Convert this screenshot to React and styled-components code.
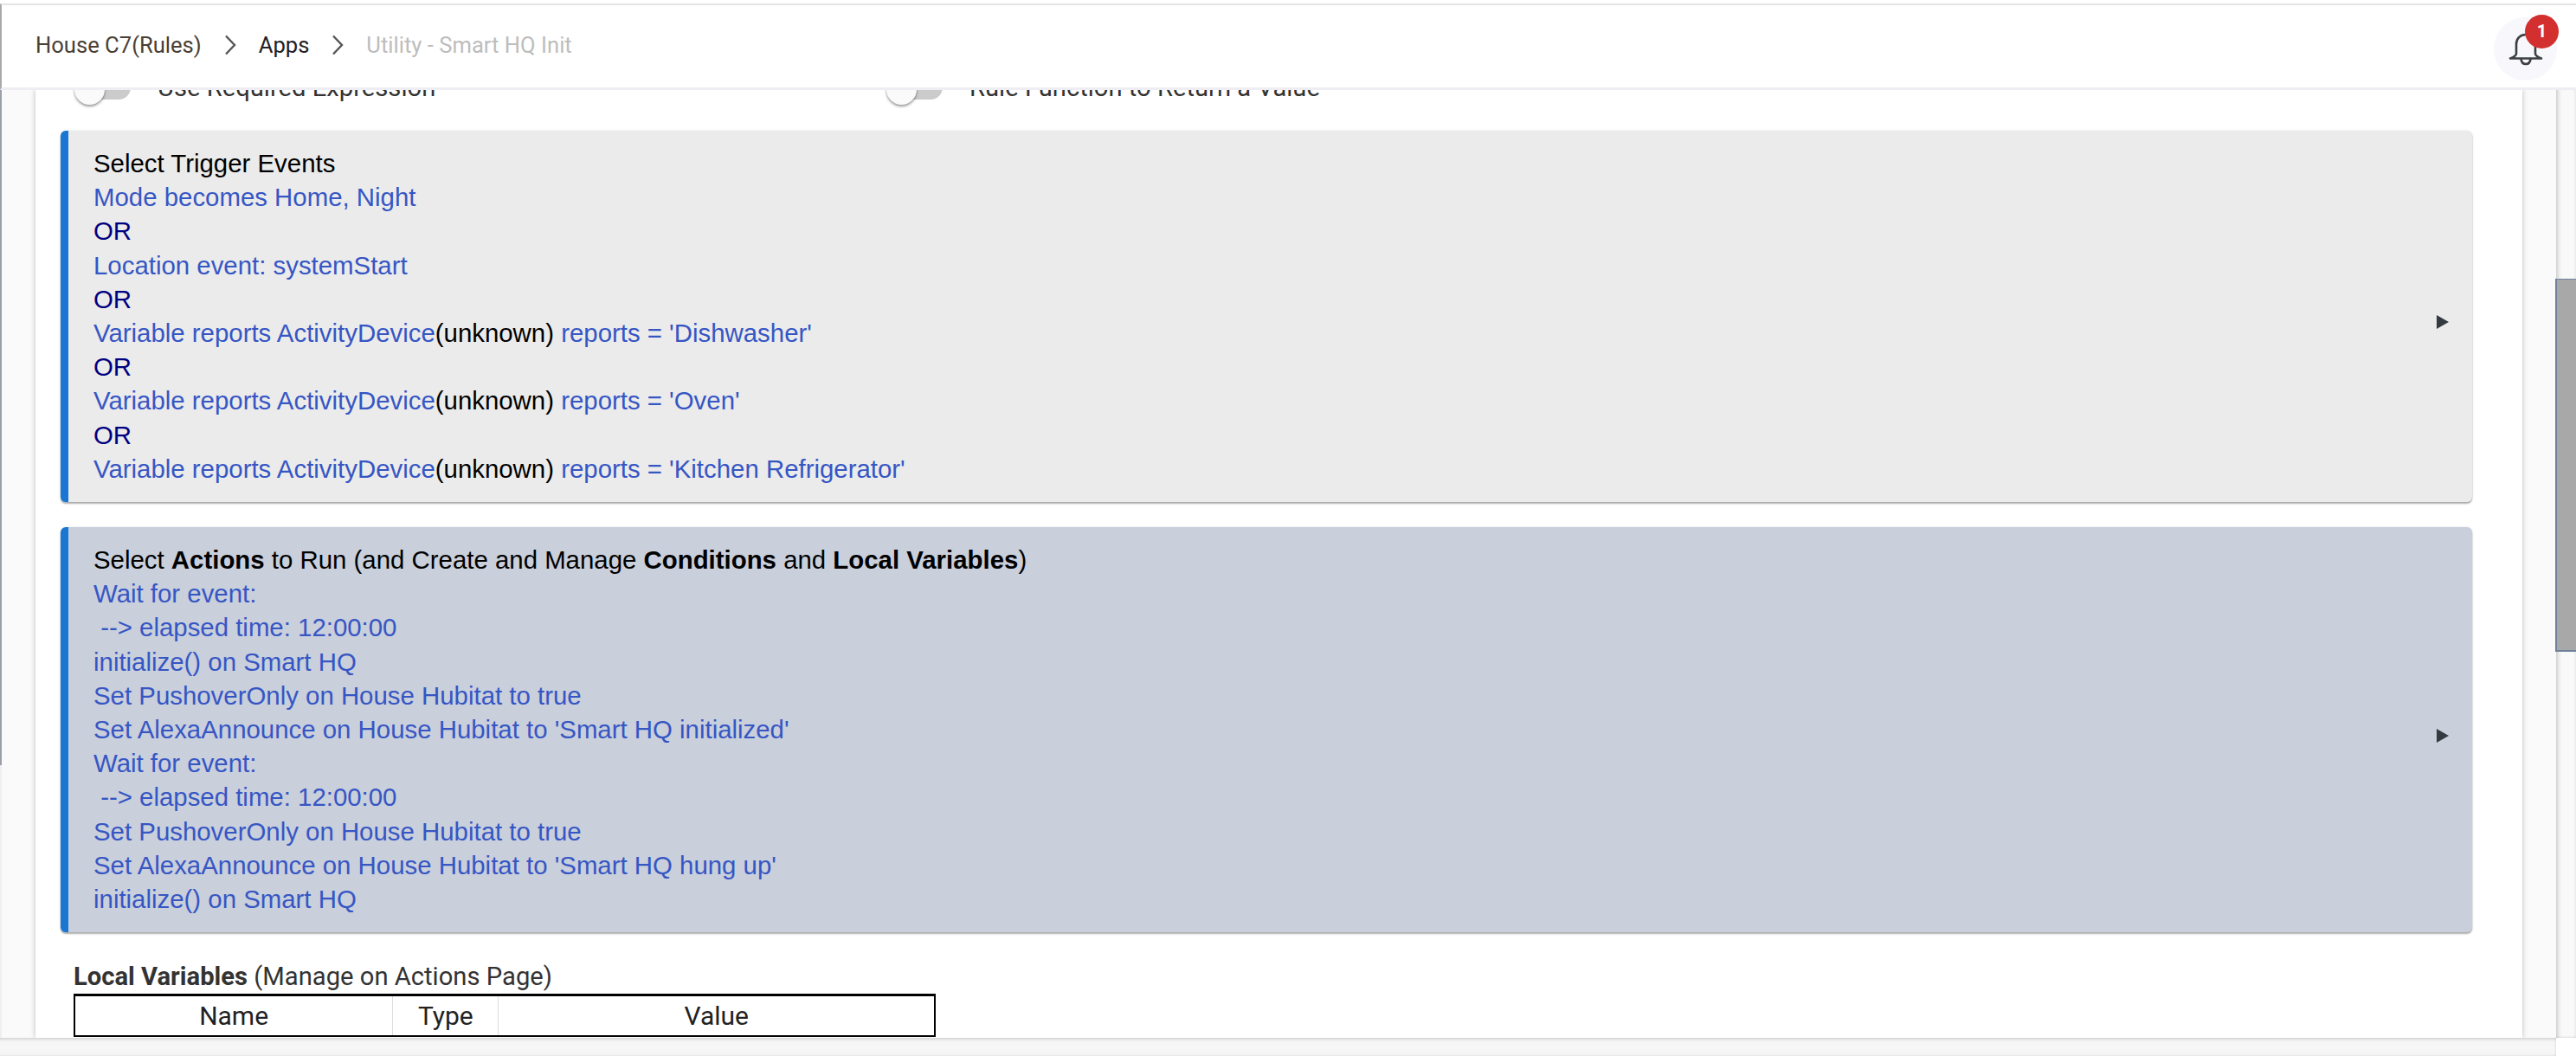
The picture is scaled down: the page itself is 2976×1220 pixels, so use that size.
import React from 'react';
import styled, { createGlobalStyle } from 'styled-components';

const Global = createGlobalStyle`
  html, body { margin: 0; padding: 0; height: 100%; background: #fff; overflow: hidden; }
  * { box-sizing: border-box; }
`;

const Page = styled.div`
  width: 2976px;
  height: 1220px;
  display: flex;
  flex-direction: column;
  overflow: hidden;
  font-family: Roboto, "Liberation Sans", sans-serif;
  background: #fff;
`;

const Header = styled.header`
  flex: none;
  height: 100px;
  margin-top: 4px;
  border-top: 2px solid #e4e4e4;
  border-bottom: 3px solid #eeedf3;
  border-left: 2px solid #a9a9a9;
  display: flex;
  align-items: center;
  justify-content: space-between;
  padding: 0 22px 0 39px;
  background: #fff;
  position: relative;
  z-index: 2;
`;

const Crumbs = styled.nav`
  display: flex;
  align-items: center;
  font-size: 25.6px;
  margin-top: -3px;
`;

const Crumb = styled.span`
  color: ${p => p.$color};
`;

const Chevron = styled.svg`
  width: 14px;
  height: 24px;
  margin: 0 26px;
  fill: none;
  stroke: #555;
  stroke-width: 2.4;
`;

const BellButton = styled.div`
  position: relative;
  width: 73px;
  height: 73px;
  border-radius: 50%;
  background: #f7f7fc;
  display: flex;
  align-items: center;
  justify-content: center;
  margin-top: 5px;
`;

const Badge = styled.span`
  position: absolute;
  top: -3px;
  right: -2px;
  width: 39px;
  height: 39px;
  border-radius: 50%;
  background: #d32f2f;
  color: #fff;
  font-size: 20px;
  font-weight: 700;
  display: flex;
  align-items: center;
  justify-content: center;
`;

const Body = styled.div`
  flex: 1;
  min-height: 0;
  display: flex;
`;

const Viewport = styled.div`
  flex: 1;
  min-width: 0;
  background: #fafafa;
  padding: 0 39px 0 39px;
  border-left: 2px solid;
  border-image: linear-gradient(#9a9fa8 0 780px, #efefef 780px) 1;
  overflow: hidden;
`;

const Card = styled.main`
  background: #fff;
  height: 100%;
  padding: 0 58px 0 29px;
  box-shadow: 0 0 6px rgba(0, 0, 0, 0.25);
  overflow: hidden;
`;

const ToggleRow = styled.div`
  display: flex;
  height: 47px;
`;

const ToggleCell = styled.div`
  width: 938px;
  display: flex;
  align-items: center;
  padding-left: 16px;
  flex: none;
  height: 67px;
  margin-top: -37px;
`;

const Track = styled.span`
  position: relative;
  display: block;
  width: 65px;
  height: 28px;
  border-radius: 14px;
  background: #cbcbcb;
  margin-right: 31px;
  flex: none;
`;

const Knob = styled.span`
  position: absolute;
  left: 0;
  top: -1px;
  width: 35px;
  height: 35px;
  border-radius: 50%;
  background: #fafafa;
  box-shadow: 0 2px 3px rgba(0, 0, 0, 0.4);
`;

const ToggleLabel = styled.span`
  font-size: 29.2px;
  color: #333;
  white-space: nowrap;
`;

const Panel = styled.section`
  position: relative;
  background: ${p => p.$bg};
  border-left: 9px solid #1976d2;
  border-radius: 6px;
  margin-top: ${p => p.$gap}px;
  padding: 18px 31px 19px 29px;
  box-shadow: 0 2px 2px rgba(0, 0, 0, 0.3), 0 0 3px rgba(0, 0, 0, 0.1);
  display: flex;
  justify-content: space-between;
  align-items: center;
  width: 2786px;
`;

const Lines = styled.div`
  font-family: "Liberation Sans", Arial, sans-serif;
  font-size: 29.4px;
  line-height: 39.2px;
`;

const Line = styled.div`
  color: ${p => p.$color || '#3656c4'};
  white-space: pre;
`;

const Plain = styled.span`
  color: #000;
`;

const Arrow = styled.span`
  display: block;
  width: 0;
  height: 0;
  border-left: 14px solid #343a40;
  border-top: 8px solid transparent;
  border-bottom: 8px solid transparent;
  margin: 14px -4px 0 0;
`;

const VarsTitle = styled.div`
  margin: 32px 0 0 15px;
  font-size: 29.2px;
  line-height: 39px;
  color: #333;
`;

const VarTable = styled.table`
  margin: 0 0 0 15px;
  width: 996px;
  border-collapse: collapse;
  border: solid #000;
  border-width: 3px 2px 2px;
  table-layout: fixed;
`;

const Th = styled.th`
  font-size: 30px;
  font-weight: 400;
  color: #222;
  height: 47px;
  padding: 0;
  border-right: 1px solid #dcdcdc;
  width: ${p => p.$w}px;
  &:last-child { border-right: 0; }
`;

const VScroll = styled.aside`
  width: 23px;
  flex: none;
  display: flex;
  flex-direction: column;
  background: #f9f9f9;
  box-shadow: inset 6px 0 5px -4px rgba(0, 0, 0, 0.2), inset -4px 0 4px -4px rgba(0, 0, 0, 0.12), inset 0 -3px 3px -3px rgba(0, 0, 0, 0.2);
`;

const VThumb = styled.div`
  width: calc(100% + 1px);
  height: 431px;
  margin: 218px 0 0 -1px;
  background: #a8a8a8;
  border: solid #6f829c;
  border-width: 1px 0 2px 2px;
`;

const BottomRow = styled.div`
  flex: none;
  height: 21px;
  display: flex;
`;

const HScroll = styled.div`
  flex: 1;
  background: #f6f6f6;
  box-shadow: inset 0 5px 4px -4px rgba(0, 0, 0, 0.2), inset 0 -3px 3px -3px rgba(0, 0, 0, 0.15), inset -3px 0 3px -3px rgba(0, 0, 0, 0.15);
`;

const Corner = styled.div`
  width: 23px;
  background: #fff;
`;

const Chev = () => (
  <Chevron viewBox="0 0 14 24"><path d="M2 1.5 L12 12 L2 22.5" /></Chevron>
);

const Bell = () => (
  <svg width="42" height="42" viewBox="0 0 42 42" fill="none" stroke="#3c4043" strokeWidth="2.6" strokeLinecap="round" strokeLinejoin="round">
    <path d="M10 27 V16 C10 9.5 14.5 5 21 5 C27.5 5 32 9.5 32 16 V27 C32 29 35 31 39 32.5 H3 C7 31 10 29 10 27 Z" />
    <path d="M15.5 33 C16 37.5 18.5 39 21 39 C23.5 39 26 37.5 26.5 33" />
  </svg>
);

const Toggle = ({ label }) => (
  <ToggleCell>
    <Track><Knob /></Track>
    <ToggleLabel>{label}</ToggleLabel>
  </ToggleCell>
);

const OR = () => <Line $color="#000080">OR</Line>;

export default function App() {
  return (
    <Page>
      <Global />
      <Header>
        <Crumbs>
          <Crumb $color="#4a3f35">House C7(Rules)</Crumb>
          <Chev />
          <Crumb $color="#222">Apps</Crumb>
          <Chev />
          <Crumb $color="#bdbdbd">Utility - Smart HQ Init</Crumb>
        </Crumbs>
        <BellButton>
          <Bell />
          <Badge>1</Badge>
        </BellButton>
      </Header>
      <Body>
        <Viewport>
          <Card>
            <ToggleRow>
              <Toggle label="Use Required Expression" />
              <Toggle label="Rule Function to Return a Value" />
            </ToggleRow>
            <Panel $bg="#ebebeb" $gap={0}>
              <Lines>
                <Line $color="#000">Select Trigger Events</Line>
                <Line>Mode becomes Home, Night</Line>
                <OR />
                <Line>Location event: systemStart</Line>
                <OR />
                <Line>Variable reports ActivityDevice<Plain>(unknown)</Plain> reports = 'Dishwasher'</Line>
                <OR />
                <Line>Variable reports ActivityDevice<Plain>(unknown)</Plain> reports = 'Oven'</Line>
                <OR />
                <Line>Variable reports ActivityDevice<Plain>(unknown)</Plain> reports = 'Kitchen Refrigerator'</Line>
              </Lines>
              <Arrow />
            </Panel>
            <Panel $bg="#c9cfdb" $gap={29}>
              <Lines>
                <Line $color="#000">Select <b>Actions</b> to Run (and Create and Manage <b>Conditions</b> and <b>Local Variables</b>)</Line>
                <Line>Wait for event:</Line>
                <Line> --&gt; elapsed time: 12:00:00</Line>
                <Line>initialize() on Smart HQ</Line>
                <Line>Set PushoverOnly on House Hubitat to true</Line>
                <Line>Set AlexaAnnounce on House Hubitat to 'Smart HQ initialized'</Line>
                <Line>Wait for event:</Line>
                <Line> --&gt; elapsed time: 12:00:00</Line>
                <Line>Set PushoverOnly on House Hubitat to true</Line>
                <Line>Set AlexaAnnounce on House Hubitat to 'Smart HQ hung up'</Line>
                <Line>initialize() on Smart HQ</Line>
              </Lines>
              <Arrow />
            </Panel>
            <VarsTitle><b>Local Variables</b> (Manage on Actions Page)</VarsTitle>
            <VarTable>
              <thead>
                <tr>
                  <Th $w={367}>Name</Th>
                  <Th $w={122}>Type</Th>
                  <Th $w={503}>Value</Th>
                </tr>
              </thead>
            </VarTable>
          </Card>
        </Viewport>
        <VScroll><VThumb /></VScroll>
      </Body>
      <BottomRow>
        <HScroll />
        <Corner />
      </BottomRow>
    </Page>
  );
}
